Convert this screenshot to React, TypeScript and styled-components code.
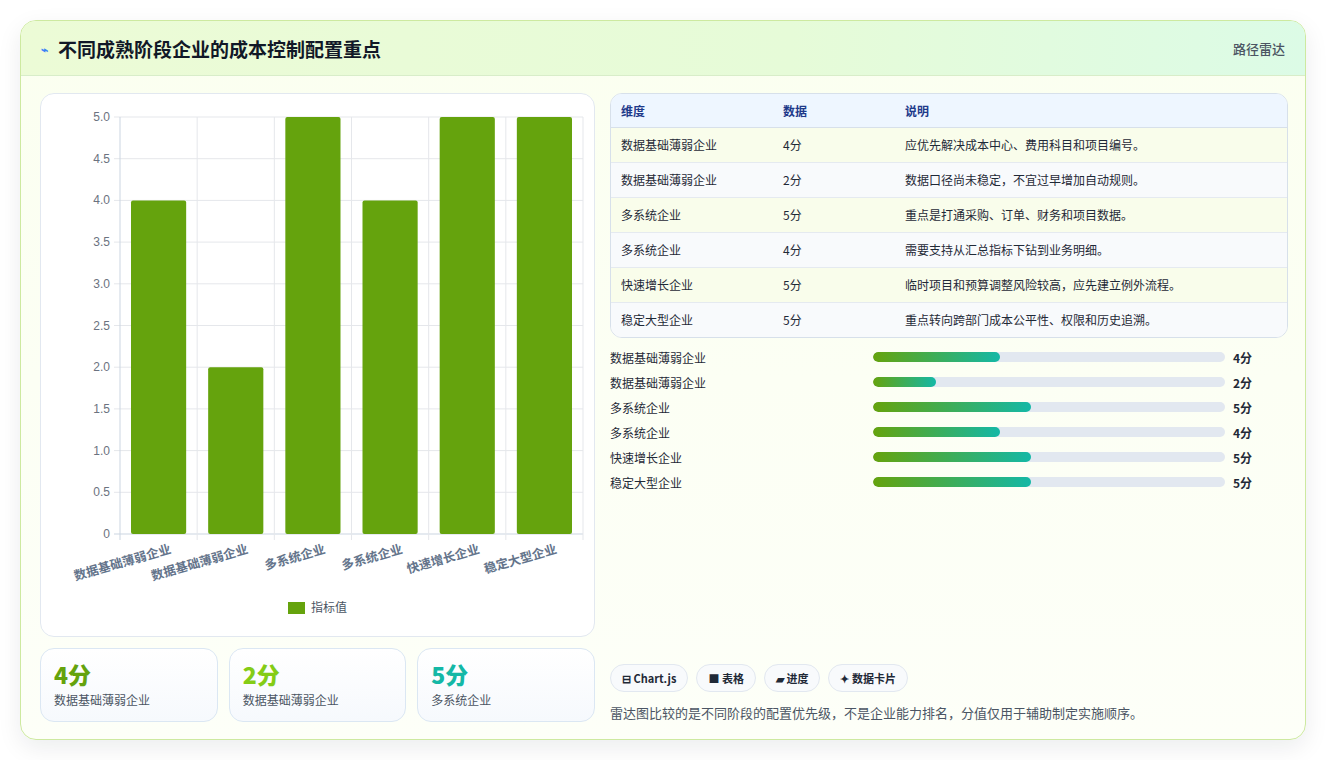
import React from "react";
import styled, { createGlobalStyle } from "styled-components";

const Global = createGlobalStyle`
  html, body { margin: 0; padding: 0; background: #ffffff; }
  body { font-family: "Noto Sans CJK SC", "Noto Sans", sans-serif; }
  * { box-sizing: border-box; }
`;

const Page = styled.div`
  padding: 20px 21px 20px 20px;
`;
const Card = styled.div`
  width: 1286px;
  height: 720px;
  border: 1px solid #cde9a0;
  border-radius: 16px;
  background: linear-gradient(180deg, #fbfff0 0%, #fdfff8 100%);
  box-shadow: 0 8px 24px rgba(15, 23, 42, 0.08);
  overflow: hidden;
  display: flex;
  flex-direction: column;
`;
const Header = styled.div`
  height: 55px;
  flex: none;
  display: flex;
  align-items: center;
  justify-content: space-between;
  padding: 0 20px;
  background: linear-gradient(90deg, #ecfbd6 0%, #e6fbd8 60%, #dcfbe6 100%);
  border-bottom: 1px solid #d8edc9;
`;
const Title = styled.h1`
  margin: 0;
  font-size: 19px;
  font-weight: 700;
  color: #111827;
  display: flex;
  align-items: center;
  gap: 10px;
`;
const Bolt = styled.span`
  color: #3b82f6;
  font-size: 12px;
`;
const HeaderTag = styled.span`
  font-size: 13px;
  color: #4b5563;
  font-weight: 500;
`;
const Body = styled.div`
  flex: 1;
  display: grid;
  grid-template-columns: 555px 678px;
  gap: 15px;
  padding: 17px 19px 19px 19px;
`;
const LeftCol = styled.div`
  display: flex;
  flex-direction: column;
  gap: 11px;
`;
const ChartCard = styled.div`
  height: 544px;
  border: 1px solid #e2e8f0;
  border-radius: 14px;
  background: #ffffff;
`;
const Stats = styled.div`
  display: grid;
  grid-template-columns: repeat(3, 1fr);
  gap: 11px;
`;
const Stat = styled.div`
  height: 74px;
  border: 1px solid #dbe7f3;
  border-radius: 14px;
  background: linear-gradient(180deg, #ffffff, #f6f9fd);
  padding: 10px 13px;
`;
const StatValue = styled.div<{ $c: string }>`
  font-size: 23px;
  font-weight: 800;
  color: ${(p) => p.$c};
  line-height: 30px;
`;
const StatLabel = styled.div`
  font-size: 12px;
  color: #4b5563;
  margin-top: 2px;
`;
const RightCol = styled.div`
  display: flex;
  flex-direction: column;
`;
const TableWrap = styled.div`
  border: 1px solid #d7e0ea;
  border-radius: 12px;
  overflow: hidden;
  background: #fff;
`;
const Table = styled.table`
  width: 100%;
  border-collapse: collapse;
  font-size: 12px;
`;
const Th = styled.th`
  text-align: left;
  font-weight: 600;
  color: #1e3a8a;
  background: #eef6ff;
  height: 33px;
  padding: 0 10px;
  border-bottom: 1px solid #d7e0ea;
`;
const Tr = styled.tr<{ $alt: boolean }>`
  background: ${(p) => (p.$alt ? "#f8fafc" : "#f9fdeb")};
`;
const Td = styled.td`
  height: 35px;
  padding: 0 10px;
  color: #1f2937;
  border-top: 1px solid #e5eaf0;
`;
const Bars = styled.div`
  margin-top: 10px;
  display: flex;
  flex-direction: column;
  gap: 7px;
`;
const BarRow = styled.div`
  display: grid;
  grid-template-columns: 255px 352px 1fr;
  align-items: center;
  column-gap: 8px;
  height: 18px;
  font-size: 12px;
  color: #1f2937;
`;
const Track = styled.div`
  height: 10px;
  border-radius: 5px;
  background: #e2e8f0;
  overflow: hidden;
`;
const Fill = styled.div`
  height: 100%;
  border-radius: 5px;
  background: linear-gradient(90deg, #65a30d, #14b8a6);
`;
const BarValue = styled.span`
  font-weight: 700;
`;
const Spacer = styled.div`
  flex: 1;
`;
const Chips = styled.div`
  display: flex;
  gap: 8px;
`;
const Chip = styled.span`
  height: 28px;
  padding: 0 11px;
  border: 1px solid #e2e8f0;
  border-radius: 14px;
  background: #f8fafc;
  font-size: 11px;
  font-weight: 600;
  color: #1f2937;
  display: inline-flex;
  align-items: center;
  gap: 4px;
`;
const Note = styled.p`
  margin: 11px 0 0;
  font-size: 13px;
  color: #4b5563;
`;

const cats = ["数据基础薄弱企业", "数据基础薄弱企业", "多系统企业", "多系统企业", "快速增长企业", "稳定大型企业"];
const vals = [4, 2, 5, 4, 5, 5];
const rows = [
  ["数据基础薄弱企业", "4分", "应优先解决成本中心、费用科目和项目编号。"],
  ["数据基础薄弱企业", "2分", "数据口径尚未稳定，不宜过早增加自动规则。"],
  ["多系统企业", "5分", "重点是打通采购、订单、财务和项目数据。"],
  ["多系统企业", "4分", "需要支持从汇总指标下钻到业务明细。"],
  ["快速增长企业", "5分", "临时项目和预算调整风险较高，应先建立例外流程。"],
  ["稳定大型企业", "5分", "重点转向跨部门成本公平性、权限和历史追溯。"],
];

function Chart() {
  // chart card origin at (40,93) in page coords
  const left = 79, right = 542, top = 23, bottom = 440;
  const step = (right - left) / 6;
  const ticks = [0, 0.5, 1, 1.5, 2, 2.5, 3, 3.5, 4, 4.5, 5];
  const y = (v: number) => bottom - (v / 5) * (bottom - top);
  return (
    <svg width="553" height="542" style={{ display: "block" }}>
      {ticks.map((t) => (
        <g key={t}>
          <line x1={left - 6} x2={right} y1={y(t)} y2={y(t)} stroke={t === 0 ? "#cbd5e1" : "#e5e7eb"} />
          <text x={left - 10} y={y(t) + 4} textAnchor="end" fontSize="12" fill="#6b7280" fontFamily="Liberation Sans, sans-serif">
            {t === 0 ? "0" : t.toFixed(1)}
          </text>
        </g>
      ))}
      {Array.from({ length: 7 }).map((_, i) => (
        <line key={i} x1={left + i * step} x2={left + i * step} y1={top} y2={bottom + 6} stroke={i === 0 ? "#cbd5e1" : "#e5e7eb"} />
      ))}
      {vals.map((v, i) => (
        <rect key={i} x={left + i * step + 11} width={step - 22} y={y(v)} height={bottom - y(v)} rx="2" fill="#65a30d" />
      ))}
      {cats.map((c, i) => (
        <text key={i} transform={`translate(${left + i * step + step / 2 + 12},${bottom + 15}) rotate(-16)`} textAnchor="end" fontSize="12.5" fontWeight="600" fill="#64748b" dy="4">
          {c}
        </text>
      ))}
      <rect x="247" y="508" width="17" height="12" fill="#65a30d" />
      <text x="270" y="518" fontSize="12" fill="#4b5563">指标值</text>
    </svg>
  );
}

export default function App() {
  return (
    <>
      <Global />
      <Page>
        <Card>
          <Header>
            <Title>
              <Bolt>⌁</Bolt>不同成熟阶段企业的成本控制配置重点
            </Title>
            <HeaderTag>路径雷达</HeaderTag>
          </Header>
          <Body>
            <LeftCol>
              <ChartCard>
                <Chart />
              </ChartCard>
              <Stats>
                <Stat>
                  <StatValue $c="#65a30d">4分</StatValue>
                  <StatLabel>数据基础薄弱企业</StatLabel>
                </Stat>
                <Stat>
                  <StatValue $c="#84cc16">2分</StatValue>
                  <StatLabel>数据基础薄弱企业</StatLabel>
                </Stat>
                <Stat>
                  <StatValue $c="#14b8a6">5分</StatValue>
                  <StatLabel>多系统企业</StatLabel>
                </Stat>
              </Stats>
            </LeftCol>
            <RightCol>
              <TableWrap>
                <Table>
                  <thead>
                    <tr>
                      <Th style={{ width: 162 }}>维度</Th>
                      <Th style={{ width: 122 }}>数据</Th>
                      <Th>说明</Th>
                    </tr>
                  </thead>
                  <tbody>
                    {rows.map((r, i) => (
                      <Tr key={i} $alt={i % 2 === 1}>
                        <Td>{r[0]}</Td>
                        <Td>{r[1]}</Td>
                        <Td>{r[2]}</Td>
                      </Tr>
                    ))}
                  </tbody>
                </Table>
              </TableWrap>
              <Bars>
                {vals.map((v, i) => (
                  <BarRow key={i}>
                    <span>{cats[i]}</span>
                    <Track>
                      <Fill style={{ width: `${v * 9}%` }} />
                    </Track>
                    <BarValue>{v}分</BarValue>
                  </BarRow>
                ))}
              </Bars>
              <Spacer />
              <Chips>
                <Chip>⊟ Chart.js</Chip>
                <Chip>■ 表格</Chip>
                <Chip>▰ 进度</Chip>
                <Chip>✦ 数据卡片</Chip>
              </Chips>
              <Note>雷达图比较的是不同阶段的配置优先级，不是企业能力排名，分值仅用于辅助制定实施顺序。</Note>
            </RightCol>
          </Body>
        </Card>
      </Page>
    </>
  );
}
